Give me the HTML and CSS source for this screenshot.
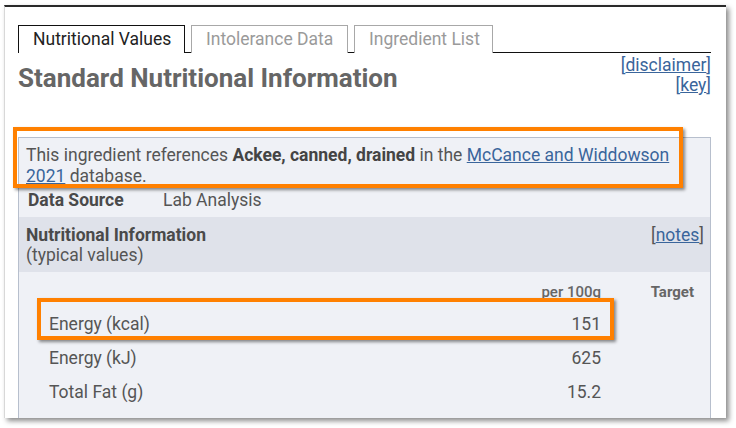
FILE: index.html
```html
<!DOCTYPE html>
<html>
<head>
<meta charset="utf-8">
<link rel="stylesheet" href="styles.css">
</head>
<body>
<div class="frame">
  <div class="tabs">
    <div class="tab active">Nutritional Values</div>
    <div class="tab">Intolerance Data</div>
    <div class="tab">Ingredient List</div>
  </div>
  <div class="header">
    <h1 class="title">Standard Nutritional Information</h1>
    <div class="hlinks">
      <div>[<a href="#">disclaimer</a>]</div>
      <div>[<a href="#">key</a>]</div>
    </div>
  </div>
  <div class="panel">
    <p class="ref">This ingredient references <b>Ackee, canned, drained</b> in the <a href="#">McCance and Widdowson 2021</a> database.</p>
    <div class="source"><span class="src-label">Data Source</span><span>Lab Analysis</span></div>
    <div class="band">
      <div class="band-text"><b>Nutritional Information</b><br>(typical values)</div>
      <div class="band-link">[<a href="#">notes</a>]</div>
    </div>
    <div class="table">
      <div class="thead">
        <span class="c-name"></span>
        <span class="c-val per">per 100g</span>
        <span class="c-tgt tgt">Target</span>
      </div>
      <div class="row"><span class="c-name">Energy (kcal)</span><span class="c-val">151</span><span class="c-tgt"></span></div>
      <div class="row"><span class="c-name">Energy (kJ)</span><span class="c-val">625</span><span class="c-tgt"></span></div>
      <div class="row"><span class="c-name">Total Fat (g)</span><span class="c-val">15.2</span><span class="c-tgt"></span></div>
    </div>
  </div>
  <div class="hl hl-ref"></div>
  <div class="hl hl-row"></div>
</div>
</body>
</html>
```
FILE: styles.css
```css
* { box-sizing: border-box; }
html, body { margin: 0; padding: 0; background: #fff; }
body {
  font-family: Roboto, "Liberation Sans", Arial, sans-serif;
  color: #555;
  width: 736px;
  height: 428px;
  overflow: hidden;
}
.frame {
  position: relative;
  margin: 5px 0 0 4px;
  width: 722px;
  height: 413px;
  background: #fff;
  border-top: 2px solid #2a2a2a;
  border-left: 1px solid #d8d8d8;
  box-shadow: 3px 3px 5px rgba(0,0,0,0.45);
  padding: 18px 15px 0 13px;
  overflow: hidden;
}
.tabs {
  display: flex;
  gap: 6px;
  height: 28px;
  border-bottom: 1px solid #111;
}
.tab {
  height: 28px;
  padding: 0 0 0 14px;
  border: 1px solid #a8a8a8;
  border-bottom: none;
  font-size: 17.5px;
  line-height: 26px;
  color: #9a9a9a;
  background: #fff;
  white-space: nowrap;
  overflow: hidden;
}
.tab:nth-child(2) { width: 157px; }
.tab:nth-child(3) { width: 139px; }
.tab.active {
  width: 167px;
  border-color: #111;
  color: #222;
  position: relative;
  z-index: 1;
  box-shadow: 0 1px 0 #fff;
}
.header {
  display: flex;
  justify-content: space-between;
  align-items: flex-start;
  height: 84px;
}
.title {
  margin: 10px 0 0 0;
  font-size: 26px;
  line-height: 30px;
  font-weight: 700;
  color: #666;
}
.hlinks {
  margin-top: 2px;
  text-align: right;
  font-size: 17.5px;
  line-height: 20px;
  color: #3a659b;
}
a { color: #3a659b; text-decoration: underline; }
.panel {
  background: #eff1f6;
  border: 1px solid #b7bfcd;
  border-bottom: none;
  height: 300px;
}
.ref {
  margin: 0;
  padding: 7px 16px 0 7px;
  font-size: 17.5px;
  line-height: 21px;
}
.ref b { color: #444; }
.source {
  display: flex;
  font-size: 17.5px;
  line-height: 26px;
  padding: 0 0 4px 9px;
}
.src-label { width: 135px; font-weight: 700; color: #4a4a4a; }
.band {
  display: flex;
  justify-content: space-between;
  background: #dfe2ea;
  height: 55px;
  padding: 8px 6px 0 7px;
  font-size: 17.5px;
  line-height: 20px;
}
.band b { color: #4a4a4a; }
.table { font-size: 17.5px; }
.thead, .row {
  display: grid;
  grid-template-columns: 1fr 100px 98px;
}
.thead {
  padding-top: 10px;
  height: 35px;
  font-size: 15px;
  line-height: 20px;
  color: #666;
}
.per { font-weight: 500; }
.tgt { font-weight: 700; }
.row { height: 34px; line-height: 34px; }
.c-name { padding-left: 30px; }
.c-val { text-align: right; padding-right: 11px; }
.c-tgt { text-align: right; padding-right: 16px; }
.hl {
  position: absolute;
  border: 4px solid #ff8000;
  box-shadow: 2px 2px 3px rgba(0,0,0,0.45);
}
.hl-ref { left: 8px; top: 120px; width: 670px; height: 61px; }
.hl-row { left: 32px; top: 291px; width: 577px; height: 42px; }
```
